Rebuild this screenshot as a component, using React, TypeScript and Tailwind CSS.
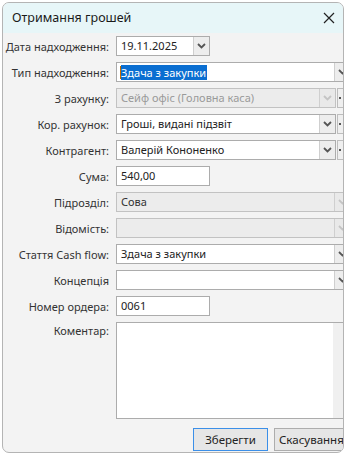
import React from 'react';

const font = { fontFamily: '"Noto Sans", "Open Sans", sans-serif' };

function Chevron({ disabled = false }: { disabled?: boolean }) {
  return (
    <svg width="9" height="6" viewBox="0 0 9 6" className="block">
      <path
        d="M1 1 L4.5 4.5 L8 1"
        fill="none"
        stroke={disabled ? '#c4c4c4' : '#555'}
        strokeWidth="1.8"
      />
    </svg>
  );
}

function DropBtn({ disabled = false }: { disabled?: boolean }) {
  return (
    <div
      className={`w-[16px] h-full shrink-0 flex items-center justify-center border-l border-[#cfcfcf] ${
        disabled ? 'bg-[#e9e9e9]' : 'bg-[#ededed]'
      }`}
    >
      <Chevron disabled={disabled} />
    </div>
  );
}

function Dots() {
  return (
    <div className="w-[14px] h-[20px] shrink-0 ml-px border border-[#bdbdbd] bg-[#efefef] flex items-center justify-center gap-[2px]">
      <span className="w-[2px] h-[2px] bg-[#555]" />
      <span className="w-[2px] h-[2px] bg-[#555]" />
      <span className="w-[2px] h-[2px] bg-[#555]" />
    </div>
  );
}

function Row({ label, children }: { label: string; children: React.ReactNode }) {
  return (
    <div className="flex items-center h-[20px]">
      <div className="w-[107px] shrink-0 text-right text-[11px] text-[#333] pr-px leading-none whitespace-nowrap">
        {label}
      </div>
      <div className="ml-[6px] shrink-0 flex items-center h-full">{children}</div>
    </div>
  );
}

const base = 'text-[11px] pl-[4px] leading-[18px] whitespace-nowrap';
const txt = `${base} text-[#222]`;

export default function App() {
  return (
    <div className="w-[348px] h-[455px] bg-white pt-[2px] pl-[2px] overflow-hidden" style={font}>
      <div className="w-[342px] h-[451px] rounded-[7px] border border-[#b4b4b4] bg-[#f3f3f3] overflow-hidden flex flex-col">
        {/* Title */}
        <div className="h-[30px] shrink-0 bg-[#e7f6f8] flex items-center justify-between pl-[9px] pr-[8px]">
          <span className="text-[12.5px] text-[#1a1a1a]">Отримання грошей</span>
          <svg width="12" height="12" viewBox="0 0 12 12">
            <path d="M1 1 L11 11 M11 1 L1 11" stroke="#222" strokeWidth="1.2" />
          </svg>
        </div>

        {/* Form */}
        <div className="flex flex-col gap-[6px] pt-[3px]">
          <Row label="Дата надходження:">
            <div className="w-[94px] h-[20px] flex border border-[#acacac] bg-white">
              <div className={`flex-1 ${txt}`}>19.11.2025</div>
              <DropBtn />
            </div>
          </Row>

          <Row label="Тип надходження:">
            <div className="w-[235px] h-[20px] flex border border-[#acacac] bg-white">
              <div className="flex-1 pl-[3px] flex items-center">
                <span className="w-px h-[13px] bg-[#c56a00]" />
                <span className="text-[11px] leading-[15px] bg-[#0a6ed1] text-white pr-px whitespace-nowrap">
                  Здача з закупки
                </span>
              </div>
              <DropBtn />
            </div>
          </Row>

          <Row label="З рахунку:">
            <div className="w-[220px] h-[20px] flex border border-[#c2c2c2] bg-[#ececec]">
              <div className={`flex-1 ${base} text-[#9a9a9a]`}>Сейф офіс (Головна каса)</div>
              <DropBtn disabled />
            </div>
            <Dots />
          </Row>

          <Row label="Кор. рахунок:">
            <div className="w-[220px] h-[20px] flex border border-[#acacac] bg-white">
              <div className={`flex-1 ${txt}`}>Гроші, видані підзвіт</div>
              <DropBtn />
            </div>
            <Dots />
          </Row>

          <Row label="Контрагент:">
            <div className="w-[220px] h-[20px] flex border border-[#acacac] bg-white">
              <div className={`flex-1 ${txt}`}>Валерій Кононенко</div>
              <DropBtn />
            </div>
            <Dots />
          </Row>

          <Row label="Сума:">
            <div className={`w-[94px] h-[20px] border border-[#acacac] bg-white ${txt}`}>540,00</div>
          </Row>

          <Row label="Підрозділ:">
            <div className="w-[235px] h-[20px] flex border border-[#c2c2c2] bg-[#ececec]">
              <div className={`flex-1 ${base} text-[#333]`}>Сова</div>
              <DropBtn disabled />
            </div>
          </Row>

          <Row label="Відомість:">
            <div className="w-[235px] h-[20px] flex border border-[#c2c2c2] bg-[#ececec]">
              <div className="flex-1" />
              <DropBtn disabled />
            </div>
          </Row>

          <Row label="Стаття Cash flow:">
            <div className="w-[235px] h-[20px] flex border border-[#acacac] bg-white">
              <div className={`flex-1 ${txt}`}>Здача з закупки</div>
              <DropBtn />
            </div>
          </Row>

          <Row label="Концепція">
            <div className="w-[235px] h-[20px] flex border border-[#acacac] bg-white">
              <div className="flex-1" />
              <DropBtn />
            </div>
          </Row>

          <Row label="Номер ордера:">
            <div className={`w-[94px] h-[20px] border border-[#acacac] bg-white ${txt}`}>0061</div>
          </Row>

          <div className="flex items-start h-[97px]">
            <div className="w-[107px] shrink-0 text-right text-[11px] text-[#333] pr-px pt-[3px] leading-none whitespace-nowrap">
              Коментар:
            </div>
            <div className="ml-[6px] shrink-0 w-[235px] h-full flex border border-[#acacac] bg-white">
              <div className="flex-1" />
              <div className="w-[17px] bg-[#f0f0f0]" />
            </div>
          </div>
        </div>

        {/* Buttons */}
        <div className="flex gap-[6px] pt-[9px] pl-[190px]">
          <button className="w-[75px] h-[23px] shrink-0 border border-[#3b8fe8] bg-[#e6e6e6] text-[11.5px] text-[#222]">
            Зберегти
          </button>
          <button className="w-[78px] h-[23px] shrink-0 border border-[#adadad] bg-[#e6e6e6] text-[11.5px] text-[#222] whitespace-nowrap text-left pl-[4px]">
            Скасування
          </button>
        </div>
      </div>
    </div>
  );
}
